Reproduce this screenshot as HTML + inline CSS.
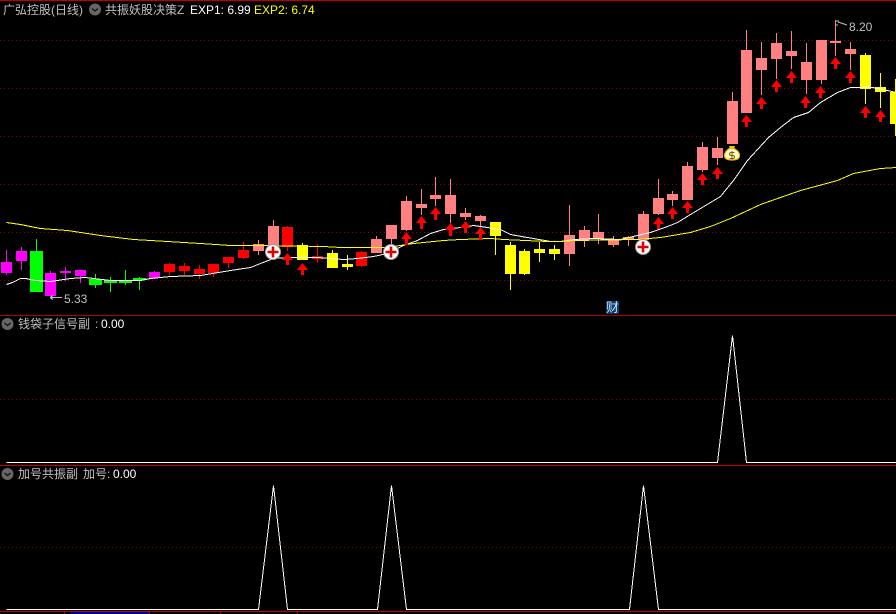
<!DOCTYPE html>
<html><head><meta charset="utf-8"><style>
html,body{margin:0;padding:0;background:#000;width:896px;height:614px;overflow:hidden}
svg{display:block;position:absolute;left:0;top:0}
text{font-family:"Liberation Sans","WenQuanYi Zen Hei","Noto Sans CJK SC",sans-serif;font-size:12px}
.g{fill:#c0c0c0}.w{fill:#fff}.y{fill:#ff0}
</style></head><body>
<svg width="896" height="614" viewBox="0 0 896 614" xmlns="http://www.w3.org/2000/svg">
<defs><pattern id="dots" x="0" y="0" width="4" height="1" patternUnits="userSpaceOnUse"><rect x="0" y="0" width="1" height="1" fill="#900000"/></pattern></defs>
<rect width="896" height="614" fill="#000"/>
<g shape-rendering="crispEdges">
<rect x="0" y="0" width="896" height="1" fill="#c00000"/>
<rect x="0" y="315" width="896" height="1" fill="#b00000"/>
<rect x="0" y="465" width="896" height="1" fill="#c00000"/>
<rect x="0" y="611" width="896" height="1" fill="#c00000"/>
<rect x="0" y="40" width="896" height="1" fill="url(#dots)"/>
<rect x="0" y="88" width="896" height="1" fill="url(#dots)"/>
<rect x="0" y="136" width="896" height="1" fill="url(#dots)"/>
<rect x="0" y="184" width="896" height="1" fill="url(#dots)"/>
<rect x="0" y="232" width="896" height="1" fill="url(#dots)"/>
<rect x="0" y="280" width="896" height="1" fill="url(#dots)"/>
<rect x="0" y="399" width="896" height="1" fill="url(#dots)"/>
<rect x="0" y="547" width="896" height="1" fill="url(#dots)"/>
<rect x="71" y="612" width="78" height="2" fill="#000090"/>
<path d="M64 612h1v2h-1zM149 612h1v2h-1zM220 612h1v2h-1zM297 612h1v2h-1z" fill="#b00000"/>
<!-- magenta -->
<path fill="#f0f" d="M1 262h11v11H1zM6 250h1v25H6zM16 251h11v10H16zM21 247h1v23H21zM45 273h11v23H45zM50 271h1v3H50zM60 271h11v2H60zM65 267h1v14H65zM75 270h11v6H75zM80 276h1v7H80zM149 272h11v6H149zM154 271h1v8H154z"/>
<!-- green -->
<path fill="#0f0" d="M30 251h13v41H30zM36 239h1v12H36zM89 279h13v6H89zM95 274h1v14H95zM104 280h13v3H104zM110 277h1v15H110zM119 280h13v3H119zM125 270h1v15H125zM133 278h13v2H133zM139 277h1v13H139z"/>
<!-- red -->
<path fill="#f00" d="M164 264h11v8H164zM169 263h1v13H169zM179 266h11v5H179zM184 263h1v12H184zM194 269h11v5H194zM199 265h1v14H199zM208 264h11v9H208zM213 273h1v4H213zM223 257h11v6H223zM228 263h1v5H228zM238 250h11v8H238zM243 242h1v17H243zM282 227h11v20H282zM287 226h1v25H287zM312 256h11v3H312zM317 244h1v19H317zM356 252h11v14H356zM361 251h1v16H361z"/>
<!-- pink -->
<path fill="#ff8080" d="M253 244h11v7H253zM258 240h1v15H258zM268 226h11v19H268zM273 220h1v25H273zM371 239h11v14H371zM376 236h1v3H376zM386 225h11v14H386zM391 239h1v6H391zM401 201h11v29H401zM406 196h1v35H406zM416 204h11v4H416zM421 189h1v26H421zM430 195h11v4H430zM435 177h1v29H435zM445 195h11v19H445zM450 179h1v44H450zM460 213h11v4H460zM465 208h1v12H465zM475 216h11v5H475zM480 215h1v13H480zM564 235h11v19H564zM569 205h1v61H569zM579 230h11v10H579zM584 226h1v21H584zM593 232h11v7H593zM598 214h1v30H598zM608 239h11v6H608zM613 236h1v11H613zM623 237h11v3H623zM628 236h1v10H628zM638 214h11v26H638zM643 211h1v3H643zM653 198h11v16H653zM658 179h1v36H658zM667 194h11v6H667zM672 191h1v15H672zM682 166h11v34H682zM687 162h1v4H687zM697 147h11v23H697zM702 142h1v30H702zM712 148h11v10H712zM717 137h1v28H717zM727 101h11v43H727zM732 92h1v9H732zM741 50h11v63H741zM746 30h1v20H746zM756 58h11v12H756zM761 42h1v53H761zM771 43h11v16H771zM776 33h1v46H776zM786 51h11v5H786zM791 31h1v38H791zM801 62h11v18H801zM806 43h1v51H806zM816 40h11v40H816zM821 80h1v4H821zM830 41h11v2H830zM835 20h1v36H835zM845 49h11v5H845zM850 42h1v28H850z"/>
<!-- yellow -->
<path fill="#ff0" d="M297 245h11v15H297zM302 243h1v2H302zM327 253h11v15H327zM332 250h1v3H332zM342 264h11v3H342zM347 255h1v15H347zM490 222h11v14H490zM495 236h1v19H495zM505 245h11v29H505zM510 242h1v48H510zM519 251h11v23H519zM524 249h1v26H524zM534 249h11v4H534zM539 242h1v20H539zM549 249h11v5H549zM554 245h1v15H554zM860 55h11v34H860zM865 53h1v51H865zM875 87h11v5H875zM880 73h1v35H880zM890 92h6v32H890zM895 79h1v57H895z"/>
<g transform="translate(0.5,0.5)" stroke-width="1" fill="none">
<!-- white MA -->
<polyline stroke="#fff" points="6,284 12,282 20,278 25,278 35,280 50,281 70,278 85,277 110,280 140,280 150,278 170,276 200,275 230,270 250,267 260,263 273,258 287,257 300,257 317,257 330,258 343,259 357,258 373,256 387,253 403,245 417,240 430,233 443,229 460,227 473,225 487,227 500,229 510,234 527,237 550,241 560,241 573,239 593,238 620,239 637,235 650,232 667,226 677,222 690,214 700,208 720,196 733,180 747,160 768,137 780,127 793,117 808,112 820,102 837,92 850,87 872,87 887,90 896,92"/>
<!-- yellow MA -->
<polyline stroke="#ff0" points="6,222 20,224 40,228 67,230 100,235 133,239 167,241 200,243 230,245 263,245 323,246 340,247 383,247 400,245 413,243 443,240 460,239 490,238 503,239 547,241 560,241 573,240 637,239 660,237 690,232 710,226 730,218 760,204 800,190 837,180 853,173 880,168 896,167"/>
<!-- sub lines -->
<polyline stroke="#fff" points="6,462 717,462 732,335 746,462 896,462"/>
<polyline stroke="#fff" points="6,609 258,609 273,485 287,609 377,609 391,485 406,609 629,609 643,485 658,609 896,609"/>
</g>
</g>
<!-- arrows -->
<path fill="#f00" d="M287.500 253l5.500 7h-4v5h-3v-5h-4zM302.500 263l5.500 7h-4v5h-3v-5h-4zM406.500 232l5.500 7h-4v6h-3v-6h-4zM421.500 216l5.500 7h-4v6h-3v-6h-4zM435.500 207l5.500 7h-4v6h-3v-6h-4zM450.500 223l5.500 7h-4v6h-3v-6h-4zM465.500 221l5.500 7h-4v5h-3v-5h-4zM480.500 227l5.500 7h-4v6h-3v-6h-4zM658.500 217l5.500 7h-4v5h-3v-5h-4zM672.500 207l5.500 7h-4v5h-3v-5h-4zM687.500 201l5.500 7h-4v5h-3v-5h-4zM702.500 173l5.500 7h-4v5h-3v-5h-4zM717.500 167l5.500 7h-4v5h-3v-5h-4zM746.500 115l5.500 7h-4v5h-3v-5h-4zM761.500 97l5.500 7h-4v5h-3v-5h-4zM776.500 80l5.500 7h-4v5h-3v-5h-4zM791.500 71l5.500 7h-4v5h-3v-5h-4zM805.500 96l5.500 7h-4v5h-3v-5h-4zM820.500 86l5.500 7h-4v5h-3v-5h-4zM835.500 57l5.500 7h-4v5h-3v-5h-4zM850.500 71l5.500 7h-4v5h-3v-5h-4zM865.500 106l5.500 7h-4v5h-3v-5h-4zM880.500 110l5.500 7h-4v5h-3v-5h-4z"/>
<!-- plus markers -->
<g>
<circle cx="273" cy="252" r="7.500" fill="#fff" stroke="#999" stroke-width="1"/><path d="M273 246.500V257.500M267.500 252H278.500" stroke="#e00000" stroke-width="2.600"/>
<circle cx="391" cy="252" r="7.500" fill="#fff" stroke="#999" stroke-width="1"/><path d="M391 246.500V257.500M385.500 252H396.500" stroke="#e00000" stroke-width="2.600"/>
<circle cx="643" cy="247" r="7.500" fill="#fff" stroke="#999" stroke-width="1"/><path d="M643 241.500V252.500M637.500 247H648.500" stroke="#e00000" stroke-width="2.600"/>
</g>
<!-- money bag -->
<g>
<path d="M729 146h6l-1 2.500h-4z" fill="#f0c800"/>
<path d="M730 148.500h4c3 1.500 5.500 4 5.500 7 0 3-3 4.500-7.500 4.500s-7.500-1.500-7.500-4.500c0-3 2.500-5.500 5.500-7.500z" fill="#fff8d0" stroke="#e8c000" stroke-width="1.200"/>
<path d="M734.500 152.500h-3.500a1.500 1.500 0 0 0 0 3h2a1.500 1.500 0 0 1 0 3h-3.500M732 151v9" fill="none" stroke="#806000" stroke-width="1"/>
</g>
<!-- price markers -->
<g shape-rendering="crispEdges">
<path d="M50 297.500H62" stroke="#c0c0c0"/><path d="M50 297.500l3-2M50 297.500l3 2" stroke="#c0c0c0"/>
</g>
<path d="M836 21h3M836 25h2M838 22l9 3" stroke="#c0c0c0" fill="none"/>
<text class="g" x="64" y="303">5.33</text>
<text class="g" x="849" y="31">8.20</text>
<!-- badge -->
<rect x="606" y="301" width="13" height="13" fill="#0a3a66"/>
<text x="606" y="312" style="fill:#bfe0ff;font-size:13px">财</text>
<!-- header icons -->
<g>
<circle cx="95" cy="9.500" r="6" fill="#666"/><path d="M92 8.500l3 2.500 3-2.500" stroke="#111" stroke-width="1.300" fill="none"/>
<circle cx="7.500" cy="324" r="6" fill="#666"/><path d="M4.500 323l3 2.500 3-2.500" stroke="#111" stroke-width="1.300" fill="none"/>
<circle cx="7.500" cy="474" r="6" fill="#666"/><path d="M4.500 473l3 2.500 3-2.500" stroke="#111" stroke-width="1.300" fill="none"/>
</g>
<text class="g" x="3" y="14">广弘控股(日线)</text>
<text class="g" x="105" y="14">共振妖股决策Z</text>
<text class="w" x="190" y="14">EXP1: 6.99</text>
<text class="y" x="254" y="14">EXP2: 6.74</text>
<text class="g" x="18" y="328">钱袋子信号副</text>
<text class="g" x="95" y="328">:</text>
<text class="w" x="101" y="328">0.00</text>
<text class="g" x="18" y="478">加号共振副</text>
<text class="g" x="83" y="478">加号:</text>
<text class="w" x="113" y="478">0.00</text>
</svg>
</body></html>
